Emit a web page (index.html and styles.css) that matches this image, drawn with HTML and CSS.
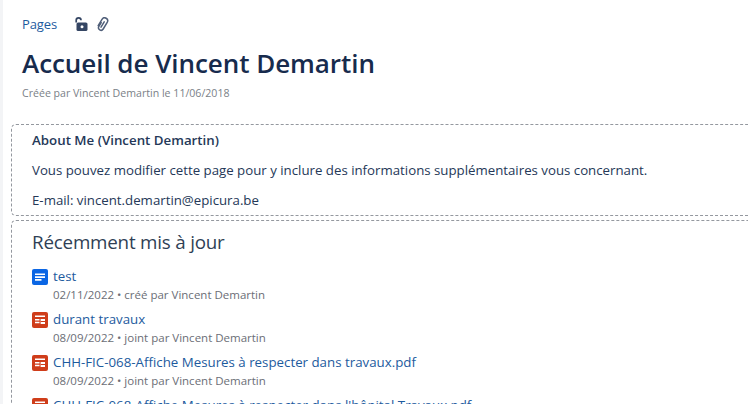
FILE: index.html
```html
<!DOCTYPE html>
<html lang="fr">
<head>
<meta charset="utf-8">
<title>Accueil de Vincent Demartin</title>
<link rel="stylesheet" href="styles.css">
</head>
<body>
<main class="page">
  <nav class="crumbs">
    <a class="crumb" href="#">Pages</a>
    <svg class="ico-lock" width="14" height="16" viewBox="0 0 14 16"><path d="M2.2 6.5V4.2a2.4 2.4 0 0 1 4.8 0" fill="none" stroke="#344563" stroke-width="1.7"/><rect x="2.5" y="6.5" width="11" height="8.5" rx="1.6" fill="#344563"/><circle cx="8" cy="10.7" r="1.5" fill="#fff"/></svg>
    <svg class="ico-clip" width="13" height="15" viewBox="0 0 13 15"><path d="M4.2 5.6 1.9 9.4a2.5 2.5 0 0 0 4.3 2.6l4-6.6A3 3 0 0 0 5 2.3L1.2 8.6M7.2 4.9l-3.2 5.3" fill="none" stroke="#505f79" stroke-width="1.5" stroke-linecap="round"/></svg>
  </nav>
  <h1 class="title">Accueil de Vincent Demartin</h1>
  <p class="byline">Créée par Vincent Demartin le 11/06/2018</p>
  <section class="panel panel-about">
    <h2 class="about-title">About Me (Vincent Demartin)</h2>
    <p class="para">Vous pouvez modifier cette page pour y inclure des informations supplémentaires vous concernant.</p>
    <p class="para">E-mail: vincent.demartin@epicura.be</p>
  </section>
  <section class="panel panel-recent">
    <h2 class="recent-title">Récemment mis à jour</h2>
    <ul class="list">
      <li class="item">
        <svg class="doc" width="16" height="16" viewBox="0 0 16 16"><rect width="16" height="16" rx="2" fill="#0b66e4"/><path d="M3 4.5h10v1.6H3zM3 7.3h10v1.6H3zM3 10.1h6.5v1.6H3z" fill="#fff"/></svg>
        <div class="body"><a class="link" href="#">test</a><div class="meta">02/11/2022 • créé par Vincent Demartin</div></div>
      </li>
      <li class="item">
        <svg class="doc" width="16" height="16" viewBox="0 0 16 16"><rect width="16" height="16" rx="2" fill="#cf3d1a"/><path d="M3 3.5h10v1.6H3zM3 7h4.5v1.4H3zM3 9.8h4.5v1.4H3zM8.6 7H13v5H8.6z" fill="#fff"/><path d="M8.6 9H13v1H8.6z" fill="#cf3d1a"/></svg>
        <div class="body"><a class="link" href="#">durant travaux</a><div class="meta">08/09/2022 • joint par Vincent Demartin</div></div>
      </li>
      <li class="item">
        <svg class="doc" width="16" height="16" viewBox="0 0 16 16"><rect width="16" height="16" rx="2" fill="#cf3d1a"/><path d="M3 3.5h10v1.6H3zM3 7h4.5v1.4H3zM3 9.8h4.5v1.4H3zM8.6 7H13v5H8.6z" fill="#fff"/><path d="M8.6 9H13v1H8.6z" fill="#cf3d1a"/></svg>
        <div class="body"><a class="link" href="#">CHH-FIC-068-Affiche Mesures à respecter dans travaux.pdf</a><div class="meta">08/09/2022 • joint par Vincent Demartin</div></div>
      </li>
      <li class="item">
        <svg class="doc" width="16" height="16" viewBox="0 0 16 16"><rect width="16" height="16" rx="2" fill="#cf3d1a"/><path d="M3 3.5h10v1.6H3zM3 7h4.5v1.4H3zM3 9.8h4.5v1.4H3zM8.6 7H13v5H8.6z" fill="#fff"/><path d="M8.6 9H13v1H8.6z" fill="#cf3d1a"/></svg>
        <div class="body"><a class="link" href="#">CHH-FIC-068-Affiche Mesures à respecter dans l'hôpital Travaux.pdf</a></div>
      </li>
    </ul>
  </section>
</main>
</body>
</html>
```
FILE: styles.css
```css
html, body { margin: 0; height: 100%; overflow: hidden; background: #fff; }
body { font-family: "Open Sans", "Noto Sans", sans-serif; color: #172b4d; }
.page { height: 404px; box-sizing: border-box; overflow: hidden; border-left: 3px solid #f3f4f6; padding: 15px 0 0 8px; }
.crumbs { display: flex; align-items: center; height: 18px; padding-left: 11px; }
.crumb { font-size: 13px; color: #1d5b9e; text-decoration: none; letter-spacing: -.1px; }
.ico-lock { margin-left: 17px; }
.ico-clip { margin-left: 9px; }
.title { margin: 10px 0 0 11px; font-size: 26px; line-height: 40px; font-weight: 600; color: #172b4d; letter-spacing: -.05px; }
.byline { margin: 3px 0 0 11px; font-size: 10.6px; line-height: 14px; color: #7a7f87; }
.panel { border: 1px dashed #94989f; border-right: 0; border-radius: 5px 0 0 5px; padding-left: 20px; }
.panel-about { margin-top: 24px; height: 92px; box-sizing: border-box; padding-top: 6px; }
.panel-recent { margin-top: 4px; padding-top: 8px; }
.about-title { margin: 0; font-size: 13.3px; line-height: 18px; font-weight: 600; color: #253858; }
.para { margin: 12px 0 0; font-size: 13.25px; line-height: 18px; color: #253858; }
.recent-title { margin: 0; font-size: 18.8px; line-height: 26px; font-weight: 400; color: #2f3f55; letter-spacing: -.2px; }
.list { list-style: none; margin: 11px 0 0; padding: 0; }
.item { display: flex; gap: 5px; margin-bottom: 5px; }
.doc { flex: none; margin-top: 3px; }
.body { min-width: 0; }
.link { display: block; font-size: 13.3px; line-height: 20px; color: #1d5b9e; text-decoration: none; white-space: nowrap; }
.meta { font-size: 11.5px; line-height: 18px; color: #6b6e76; white-space: nowrap; }
```
